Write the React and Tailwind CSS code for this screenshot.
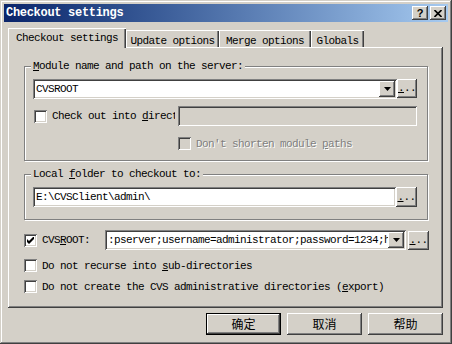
import React from "react";

const RAISED =
  "shadow-[inset_-1px_-1px_#404040,inset_1px_1px_#ffffff,inset_-2px_-2px_#808080,inset_2px_2px_#d4d0c8]";
const SUNKEN =
  "shadow-[inset_1px_1px_#808080,inset_-1px_-1px_#ffffff,inset_2px_2px_#404040,inset_-2px_-2px_#d4d0c8]";
const FONT =
  "font-['Liberation_Mono',monospace] text-[11px] tracking-[-0.6px] leading-[12px]";

function Check({ checked, disabled }) {
  return (
    <div
      className={`w-[13px] h-[13px] shrink-0 flex items-center justify-center ${SUNKEN} ${
        disabled ? "bg-[#d4d0c8]" : "bg-white"
      }`}
    >
      {checked && (
        <svg width="7" height="7" viewBox="0 0 7 7">
          <polygon points="0,2 2,4 7,-1 7,2 2,7 0,5" fill="#000" />
        </svg>
      )}
    </div>
  );
}

function Arrow() {
  return (
    <svg width="7" height="4" viewBox="0 0 7 4">
      <polygon points="0,0 7,0 3.5,4" fill="#000" />
    </svg>
  );
}

function Dots({ w, h }) {
  return (
    <div
      className={`${w} ${h} shrink-0 bg-[#d4d0c8] ${RAISED} flex items-end justify-center pb-[4px] ${FONT}`}
    >
      <span>
        <span className="underline">.</span>..
      </span>
    </div>
  );
}

function Combo({ w, tw, text }) {
  return (
    <div
      className={`${w} h-[20px] shrink-0 relative bg-white ${SUNKEN} flex items-center pl-[3px]`}
    >
      <span className={`${FONT} ${tw} whitespace-nowrap overflow-hidden`}>{text}</span>
      <div
        className={`absolute right-[2px] top-[2px] w-[16px] h-[16px] bg-[#d4d0c8] ${RAISED} flex items-center justify-center`}
      >
        <Arrow />
      </div>
    </div>
  );
}

function Tab({ label, w, selected }) {
  return (
    <div
      className={`${w} shrink-0 bg-[#d4d0c8] flex justify-center ${FONT} ${
        selected
          ? "h-[20px] -mb-[1px] relative z-10 pt-[4px] shadow-[inset_1px_1px_#ffffff,inset_-1px_0_#404040,inset_-2px_0_#808080]"
          : "h-[17px] pt-[5px] shadow-[inset_1px_1px_#ffffff,inset_-1px_0_#404040,inset_-2px_0_#808080]"
      }`}
    >
      {label}
    </div>
  );
}

function Btn({ children, def }) {
  return (
    <div
      className={`w-[75px] h-[22px] bg-[#d4d0c8] flex items-center justify-center font-['Noto_Sans_CJK_SC',sans-serif] text-[12px] leading-[14px] text-black ${
        def
          ? "shadow-[inset_0_0_0_1px_#000000,inset_-2px_-2px_#404040,inset_2px_2px_#ffffff,inset_-3px_-3px_#808080]"
          : RAISED
      }`}
    >
      {children}
    </div>
  );
}

export default function App() {
  return (
    <div className="w-[452px] h-[344px] bg-[#d4d0c8] p-[4px] flex flex-col text-black shadow-[inset_-1px_-1px_#404040,inset_1px_1px_#d4d0c8,inset_-2px_-2px_#808080,inset_2px_2px_#ffffff]">
      {/* Title bar */}
      <div className="h-[18px] shrink-0 bg-gradient-to-r from-[#0a246a] to-[#a6caf0] flex items-center justify-between pl-[2px] pr-[2px]">
        <span className="font-['Liberation_Mono',monospace] font-bold text-[12px] tracking-[-0.3px] leading-[14px] text-white">
          Checkout settings
        </span>
        <div className="flex gap-[2px]">
          <div
            className={`w-[16px] h-[14px] bg-[#d4d0c8] ${RAISED} flex items-center justify-center font-['Liberation_Sans',sans-serif] font-bold text-[11px] leading-[11px]`}
          >
            ?
          </div>
          <div
            className={`w-[16px] h-[14px] bg-[#d4d0c8] ${RAISED} flex items-center justify-center`}
          >
            <svg width="8" height="7" viewBox="0 0 8 7">
              <path d="M0.5 0 L7.5 7 M7.5 0 L0.5 7" stroke="#000" strokeWidth="1.6" />
            </svg>
          </div>
        </div>
      </div>

      {/* Client */}
      <div className="flex-1 flex flex-col pl-[4px] pr-[5px] pt-[6px]">
        {/* Tabs */}
        <div className="h-[19px] flex items-end">
          <Tab label="Checkout settings" w="w-[118px]" selected />
          <Tab label="Update options" w="w-[93px]" />
          <Tab label="Merge options" w="w-[92px]" />
          <Tab label="Globals" w="w-[53px]" />
        </div>

        {/* Panel */}
        <div className={`h-[261px] bg-[#d4d0c8] ${RAISED} pl-[16px] pt-[19px] flex flex-col ${FONT}`}>
          {/* Group 1 */}
          <div className="w-[404px] h-[95px] relative border border-[#808080] shadow-[inset_1px_1px_#ffffff,1px_1px_#ffffff] pl-[8px] pt-[12px]">
            <div className="absolute -top-[7px] left-[6px] px-[2px] bg-[#d4d0c8] whitespace-nowrap">
              <span className="underline">M</span>odule name and path on the server:
            </div>
            <div className="flex">
              <Combo w="w-[364px]" tw="w-[340px]" text="CVSROOT" />
              <Dots w="w-[20px]" h="h-[19px]" />
            </div>
            <div className="mt-[7px] h-[20px] flex items-center">
              <div className="ml-[1px]">
                <Check />
              </div>
              <div className="ml-[5px] w-[123px] mr-[3px] overflow-hidden whitespace-nowrap">
                Check out into <span className="underline">d</span>irectory:
              </div>
              <div className={`w-[239px] h-[20px] bg-[#d4d0c8] ${SUNKEN}`} />
            </div>
            <div className="mt-[11px] h-[13px] flex items-center pl-[145px]">
              <Check disabled />
              <span className="ml-[5px] text-[#808080] [text-shadow:1px_1px_0_#ffffff] whitespace-nowrap">
                Don't shorten module <span className="underline">p</span>aths
              </span>
            </div>
          </div>

          {/* Group 2 */}
          <div className="mt-[13px] w-[404px] h-[46px] relative border border-[#808080] shadow-[inset_1px_1px_#ffffff,1px_1px_#ffffff] pl-[8px] pt-[12px]">
            <div className="absolute -top-[7px] left-[6px] px-[2px] bg-[#d4d0c8] whitespace-nowrap">
              Local <span className="underline">f</span>older to checkout to:
            </div>
            <div className="flex">
              <div className={`w-[363px] h-[20px] bg-white ${SUNKEN} flex items-center pl-[3px]`}>
                E:\CVSClient\admin\
              </div>
              <Dots w="w-[21px]" h="h-[20px]" />
            </div>
          </div>

          {/* CVSROOT row */}
          <div className="mt-[10px] h-[20px] flex items-center">
            <Check checked />
            <div className="ml-[5px] w-[63px] whitespace-nowrap">
              CVS<span className="underline">R</span>OOT:
            </div>
            <Combo
              w="w-[301px]"
              tw="w-[280px]"
              text=":pserver;username=administrator;password=1234;host=localhost"
            />
            <div className="ml-[2px]">
              <Dots w="w-[21px]" h="h-[19px]" />
            </div>
          </div>

          <div className="mt-[9px] h-[13px] flex items-center">
            <Check />
            <span className="ml-[5px] whitespace-nowrap">
              Do not recurse into <span className="underline">s</span>ub-directories
            </span>
          </div>
          <div className="mt-[8px] h-[13px] flex items-center">
            <Check />
            <span className="ml-[5px] whitespace-nowrap">
              Do not create the CVS administrative directories (<span className="underline">e</span>xport)
            </span>
          </div>
        </div>

        {/* Buttons */}
        <div className="mt-[5px] flex justify-end gap-[6px]">
          <Btn def>确定</Btn>
          <Btn>取消</Btn>
          <Btn>帮助</Btn>
        </div>
      </div>
    </div>
  );
}
